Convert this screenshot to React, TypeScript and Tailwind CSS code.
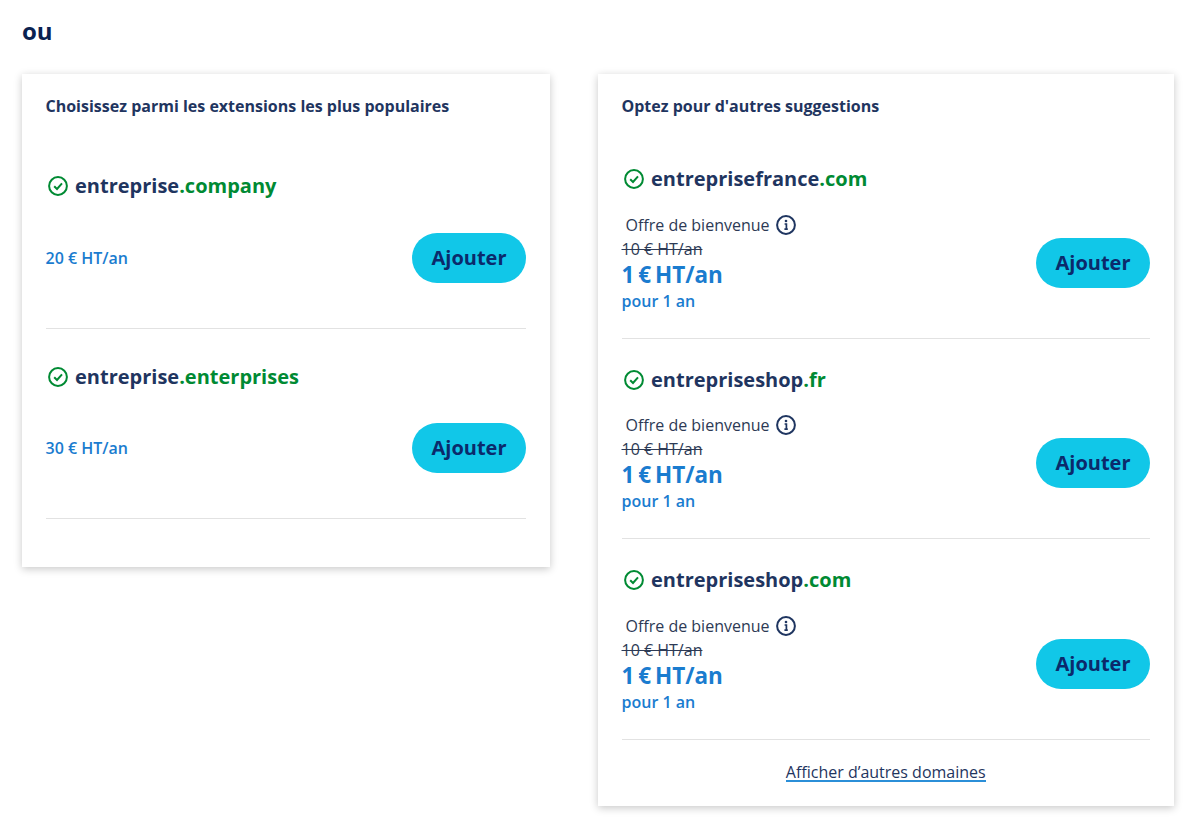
const popular = [
  { name: 'entreprise', ext: '.company', price: '20 € HT/an' },
  { name: 'entreprise', ext: '.enterprises', price: '30 € HT/an' },
];

const suggestions = [
  { name: 'entreprisefrance', ext: '.com' },
  { name: 'entrepriseshop', ext: '.fr' },
  { name: 'entrepriseshop', ext: '.com' },
];

function CheckIcon() {
  return (
    <svg width="20" height="20" viewBox="0 0 20 20" fill="none" className="ml-[2.5px] mr-[7px] shrink-0">
      <circle cx="10" cy="10" r="8.9" stroke="#008a33" strokeWidth="2" />
      <path d="M6.2 10.2l2.8 2.8 5-5.6" stroke="#008a33" strokeWidth="2" />
    </svg>
  );
}

function InfoIcon() {
  return (
    <svg width="20" height="20" viewBox="0 0 20 20" fill="none" className="ml-[6.5px]">
      <circle cx="10" cy="10" r="8.9" stroke="#1f3560" strokeWidth="2" />
      <circle cx="10" cy="6" r="1.3" fill="#1f3560" />
      <path d="M8.6 9h1.8v5M8.4 14.2h3.4" stroke="#1f3560" strokeWidth="1.7" />
    </svg>
  );
}

function DomainName({ name, ext }: { name: string; ext: string }) {
  return (
    <div className="flex items-center h-[28px]">
      <CheckIcon />
      <span className="text-[20px] font-bold leading-[28px] text-[#1f3560]">
        {name}
        <span className="text-[#008a33]">{ext}</span>
      </span>
    </div>
  );
}

function AddButton() {
  return (
    <button className="w-[114px] h-[50px] rounded-[25px] bg-[#11c7e8] text-[20px] font-bold text-[#0b2a6b]">
      Ajouter
    </button>
  );
}

export default function App() {
  return (
    <div className="min-h-screen bg-white pl-[22px] pr-[14px] pt-[13px] font-['Open_Sans',sans-serif]">
      <h2 className="text-[24px] font-bold leading-[36px] text-[#0a2150]">ou</h2>

      <div className="mt-[25px] flex items-start gap-[48px]">
        {/* Popular extensions */}
        <section className="w-[528px] h-[493px] shrink-0 bg-white shadow-[0_2px_8px_rgba(0,0,0,0.22)] pl-[23.5px] pr-[24px] pt-[22px]">
          <h3 className="text-[16px] font-bold leading-[20px] text-[#1f3560]">
            Choisissez parmi les extensions les plus populaires
          </h3>
          <div className="mt-[23px]">
            {popular.map((item, i) => (
              <div key={item.ext} className={`h-[190px] border-b border-[#e2e2e2] ${i === 0 ? 'pt-[33px]' : 'pt-[34px]'}`}>
                <DomainName name={item.name} ext={item.ext} />
                <div className={`${i === 0 ? 'mt-[33px]' : 'mt-[32px]'} flex items-center justify-between`}>
                  <span className="text-[16px] font-semibold text-[#1a7ccf]">{item.price}</span>
                  <AddButton />
                </div>
              </div>
            ))}
          </div>
        </section>

        {/* Other suggestions */}
        <section className="w-[576px] h-[732px] shrink-0 bg-white shadow-[0_2px_8px_rgba(0,0,0,0.22)] pl-[23.5px] pr-[24px] pt-[22px]">
          <h3 className="text-[16px] font-bold leading-[20px] text-[#1f3560]">
            Optez pour d'autres suggestions
          </h3>
          <div className="mt-[22.7px]">
            {suggestions.map((item, i) => (
              <div key={item.name + item.ext} className="h-[200.33px] pt-[26.5px] border-b border-[#e2e2e2]">
                <DomainName name={item.name} ext={item.ext} />
                <div className={`${i === 1 ? 'mt-[19.5px]' : 'mt-[20px]'} flex items-center justify-between`}>
                  <div>
                    <div className="flex items-center h-[24px] pl-[4px] text-[16px] text-[#2d3a55]">
                      Offre de bienvenue
                      <InfoIcon />
                    </div>
                    <div className="text-[16px] leading-[24px] text-[#2d3a55] line-through">10 € HT/an</div>
                    <div className="h-[28px] text-[22.5px] font-bold leading-[28px] text-[#1a7ccf] [word-spacing:-2px]">
                      1 € HT/an
                    </div>
                    <div className="text-[16px] font-semibold leading-[24px] text-[#1a7ccf]">pour 1 an</div>
                  </div>
                  <AddButton />
                </div>
              </div>
            ))}
          </div>
          <a href="#" className="block w-fit mx-auto mt-[24px] text-[16px] leading-[16px] text-[#1f3560] border-b-2 border-[#2b8fd8]">
            Afficher d’autres domaines
          </a>
        </section>
      </div>
    </div>
  );
}
